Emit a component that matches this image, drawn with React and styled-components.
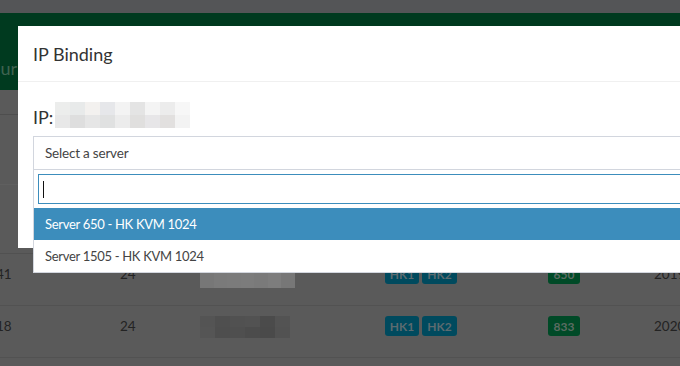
import styled, { createGlobalStyle } from "styled-components";

const GlobalStyle = createGlobalStyle`
  html, body {
    margin: 0;
    padding: 0;
    background: #5a5a5a;
  }
  * {
    box-sizing: border-box;
  }
`;

// 배경 페이지 (모달 뒤)
const Page = styled.div`
  width: 680px;
  height: 366px;
  position: relative;
  overflow: hidden;
  background: #5a5a5a;
  font-family: Lato, "Noto Sans", sans-serif;
`;
const TopBar = styled.div`
  height: 13px;
  background: #545557;
`;
const GreenBand = styled.div`
  height: 77px;
  padding-top: 44px;
  background: #003a1f;
`;
const BandTitle = styled.h1`
  width: 18px;
  margin: 0;
  overflow: hidden;
  text-indent: -19px;
  font-size: 18px;
  font-weight: 400;
  line-height: 22px;
  color: #3f6350;
  white-space: nowrap;
`;
const Spacer = styled.div`
  height: ${(p) => p.$h}px;
  border-bottom: 1px solid ${(p) => p.$line || "#515151"};
`;
const Row = styled.div`
  height: 52px;
  padding-top: 10px;
  display: grid;
  grid-template-columns: 120px 80px 185px 163px 106px 1fr;
  border-bottom: 1px solid #525252;
`;
const Cell = styled.div`
  height: 20px;
  display: flex;
  align-items: center;
  gap: 3px;
  font-size: 13.5px;
  color: #232323;
  white-space: nowrap;
  &.first {
    margin-left: -4px;
  }
`;
const Badge = styled.span`
  height: 20px;
  width: ${(p) => p.$w}px;
  display: inline-flex;
  align-items: center;
  justify-content: center;
  border-radius: 3px;
  background: ${(p) => (p.$green ? "#004a27" : "#004a5e")};
  color: ${(p) => (p.$green ? "#5b6c62" : "#5c6b70")};
  font-size: 12px;
  font-weight: 700;
`;
const Pixels = styled.div`
  display: grid;
  grid-template-columns: repeat(${(p) => p.$cols}, ${(p) => p.$w}px);
  grid-auto-rows: ${(p) => p.$rh}px;
  margin-top: ${(p) => p.$top || 0}px;
`;
const Pixel = styled.span`
  background: ${(p) => p.$c};
`;

// 모달
const Modal = styled.div`
  position: absolute;
  left: 18px;
  top: 26px;
  width: 900px;
  height: 222px;
  background: #ffffff;
  color: #333333;
`;
const ModalHeader = styled.div`
  height: 56px;
  padding: 0 15px;
  display: flex;
  align-items: center;
  border-bottom: 1px solid #f0f0f0;
`;
const ModalTitle = styled.h4`
  margin: 0;
  font-size: 18px;
  font-weight: 400;
  color: #333333;
`;
const ModalBody = styled.div`
  padding: 20px 15px 0;
`;
const IpRow = styled.div`
  height: 26px;
  display: flex;
  align-items: center;
  gap: 2px;
  margin-bottom: 8px;
`;
const IpLabel = styled.span`
  font-size: 18px;
  line-height: 26px;
  margin-top: 4px;
`;

// 셀렉트 박스
const SelectWrap = styled.div`
  position: relative;
`;
const SelectBox = styled.div`
  height: 34px;
  padding: 0 11px;
  display: flex;
  align-items: center;
  border: 1px solid #d2d6de;
  font-size: 13.5px;
  letter-spacing: -0.2px;
  color: #444444;
`;
const Dropdown = styled.div`
  position: absolute;
  top: 100%;
  left: 0;
  right: 0;
  z-index: 2;
  background: #ffffff;
  border: 1px solid #d2d6de;
  border-top: 0;
`;
const SearchWrap = styled.div`
  padding: 4px;
`;
const SearchField = styled.div`
  height: 30px;
  padding: 0 4px;
  display: flex;
  align-items: center;
  border: 1px solid #3c8dbc;
`;
const Caret = styled.span`
  width: 1px;
  height: 17px;
  background: #111111;
`;
const OptionList = styled.ul`
  margin: 0;
  padding: 0;
  list-style: none;
`;
const Option = styled.li`
  height: 32px;
  padding: 0 11px;
  display: flex;
  align-items: center;
  font-size: 13px;
  letter-spacing: -0.3px;
  color: ${(p) => (p.$active ? "#ffffff" : "#444444")};
  background: ${(p) => (p.$active ? "#3c8dbc" : "#ffffff")};
`;

const ipPixels = [
  "#ecedec", "#e8eaea", "#f3f1ef", "#e6e7ea", "#f3f3f3", "#e4e4e4", "#f4f4f4", "#ececec", "#f7f7f7",
  "#e8e8e8", "#dedede", "#e6e6e6", "#e0e1e1", "#ececec", "#e0dfde", "#e7e6e8", "#e2e0df", "#f3f3f3",
];
const rowPixels = [
  ["#777777", "#7a7a7a", "#7b7b7b", "#7c7c7c", "#7a7a7a", "#7d7d7d", "#777777"],
  ["#545454", "#4f4f4f", "#515151", "#525252", "#4b4b4b", "#535353",
   "#555555", "#4e4e4e", "#4f4f4f", "#4c4c4c", "#4a4a4a", "#525252"],
];

const rows = [
  { id: "41", cpu: "24", hk: ["HK1", "HK2"], num: "650", date: "2019-08-12" },
  { id: "18", cpu: "24", hk: ["HK1", "HK2"], num: "833", date: "2020-01-06" },
];

const servers = ["Server 650 - HK KVM 1024", "Server 1505 - HK KVM 1024"];

function TableRow({ row, index }) {
  const pix = rowPixels[index];
  return (
    <Row>
      <Cell className="first">{row.id}</Cell>
      <Cell>{row.cpu}</Cell>
      <Cell>
        {index === 0 ? (
          <Pixels $cols={7} $w={13.5} $rh={15} $top={12}>
            {pix.map((c, i) => <Pixel key={i} $c={c} />)}
          </Pixels>
        ) : (
          <Pixels $cols={6} $w={15} $rh={11} $top={2}>
            {pix.map((c, i) => <Pixel key={i} $c={c} />)}
          </Pixels>
        )}
      </Cell>
      <Cell>
        <Badge $w={34}>{row.hk[0]}</Badge>
        <Badge $w={35}>{row.hk[1]}</Badge>
      </Cell>
      <Cell>
        <Badge $green $w={32}>{row.num}</Badge>
      </Cell>
      <Cell>{row.date}</Cell>
    </Row>
  );
}

export default function App() {
  return (
    <>
      <GlobalStyle />
      <Page>
        <TopBar />
        <GreenBand>
          <BandTitle>Your servers</BandTitle>
        </GreenBand>
        <Spacer $h={25} $line="#4e4e4e" />
        <Spacer $h={70} $line="#5f5f5f" />
        <Spacer $h={69} />
        {rows.map((r, i) => <TableRow key={r.id} row={r} index={i} />)}

        <Modal>
          <ModalHeader>
            <ModalTitle>IP Binding</ModalTitle>
          </ModalHeader>
          <ModalBody>
            <IpRow>
              <IpLabel>IP:</IpLabel>
              <Pixels $cols={9} $w={15} $rh={13}>
                {ipPixels.map((c, i) => <Pixel key={i} $c={c} />)}
              </Pixels>
            </IpRow>
            <SelectWrap>
              <SelectBox>Select a server</SelectBox>
              <Dropdown>
                <SearchWrap>
                  <SearchField>
                    <Caret />
                  </SearchField>
                </SearchWrap>
                <OptionList>
                  {servers.map((s, i) => (
                    <Option key={s} $active={i === 0}>{s}</Option>
                  ))}
                </OptionList>
              </Dropdown>
            </SelectWrap>
          </ModalBody>
        </Modal>
      </Page>
    </>
  );
}
